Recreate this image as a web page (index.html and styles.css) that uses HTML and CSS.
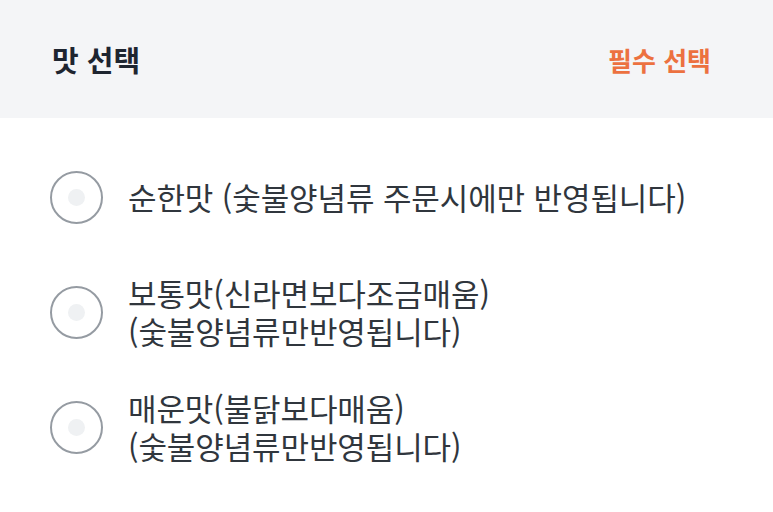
FILE: index.html
```html
<!DOCTYPE html>
<html lang="ko">
<head>
    <meta charset="UTF-8">
    <meta name="viewport" content="width=device-width, initial-scale=1.0">
    <title>맛 선택</title>
    <link rel="stylesheet" href="styles.css">
</head>
<body>
    <div class="option-group">
        <div class="group-header">
            <h2>맛 선택</h2>
            <span class="required">필수 선택</span>
        </div>

        <ul class="option-list">
            <li class="option">
                <span class="radio"></span>
                <span class="label">순한맛 (숯불양념류 주문시에만 반영됩니다)</span>
            </li>
            <li class="option">
                <span class="radio"></span>
                <span class="label">보통맛(신라면보다조금매움)<br>(숯불양념류만반영됩니다)</span>
            </li>
            <li class="option">
                <span class="radio"></span>
                <span class="label">매운맛(불닭보다매움)<br>(숯불양념류만반영됩니다)</span>
            </li>
        </ul>
    </div>
</body>
</html>
```

FILE: styles.css
```css
body {
    margin: 0;
    background: #fff;
    font-family: "Noto Sans CJK KR", "Noto Sans", sans-serif;
    color: #30363d;
}
.group-header {
    display: flex;
    justify-content: space-between;
    align-items: center;
    height: 118px;
    padding: 0 62px 0 52px;
    background: #f4f5f7;
    box-sizing: border-box;
}
.group-header h2 {
    margin: 0;
    font-size: 29px;
    font-weight: 700;
    color: #1e2530;
}
.required {
    font-size: 26px;
    font-weight: 700;
    color: #ec7140;
}
.option-list {
    list-style: none;
    margin: 0;
    padding: 40px 0 0 50px;
}
.option {
    display: flex;
    align-items: center;
    min-height: 78px;
    margin-bottom: 37px;
}
.radio {
    flex: none;
    width: 49px;
    height: 49px;
    border: 2px solid #959ba2;
    border-radius: 50%;
    display: flex;
    align-items: center;
    justify-content: center;
    margin-right: 25px;
}
.radio::after {
    content: "";
    width: 17px;
    height: 17px;
    border-radius: 50%;
    background: #eff1f3;
}
.label {
    font-size: 31px;
    line-height: 38px;
    letter-spacing: -0.1px;
}
```
